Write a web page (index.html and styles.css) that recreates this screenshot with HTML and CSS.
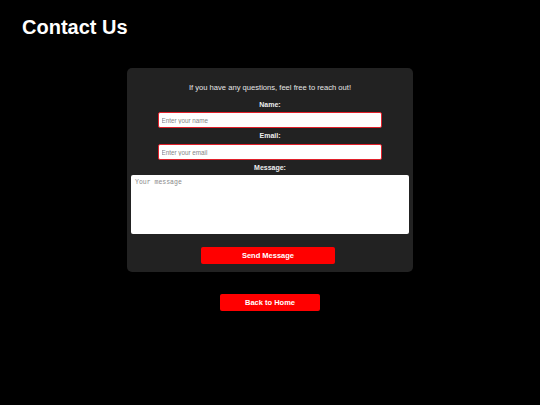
FILE: index.html
```html
<!DOCTYPE html>
<html lang="en">
<head>
<meta charset="utf-8">
<title>Contact Us</title>
<link rel="stylesheet" href="styles.css">
</head>
<body>
<header class="header">
  <h1 class="title">Contact Us</h1>
</header>
<main class="main">
  <form class="card">
    <p class="intro">If you have any questions, feel free to reach out!</p>
    <label class="label label-first" for="name">Name:</label>
    <input class="field" id="name" type="text" placeholder="Enter your name">
    <label class="label" for="email">Email:</label>
    <input class="field field-email" id="email" type="email" placeholder="Enter your email">
    <label class="label" for="msg">Message:</label>
    <textarea class="message" id="msg" placeholder="Your message"></textarea>
    <button class="btn btn-send" type="button">Send Message</button>
  </form>
  <button class="btn btn-home" type="button">Back to Home</button>
</main>
</body>
</html>
```

FILE: styles.css
```css
html, body {
  margin: 0;
  padding: 0;
  background: #000;
  color: #fff;
  font-family: "Liberation Sans", Arial, sans-serif;
}
.header {
  padding: 16px 22px 0;
}
.title {
  margin: 0;
  font-size: 20px;
  line-height: 23px;
  font-weight: bold;
}
.main {
  display: flex;
  flex-direction: column;
  align-items: center;
  margin-top: 29px;
}
.card {
  width: 286px;
  box-sizing: border-box;
  background: #222;
  border-radius: 5px;
  padding: 14px 4px 8px;
  display: flex;
  flex-direction: column;
  align-items: center;
}
.intro {
  margin: 0;
  font-size: 7.6px;
  line-height: 11px;
  color: #e6e6e6;
}
.label {
  display: block;
  margin-top: 3px;
  font-size: 7px;
  line-height: 9px;
  font-weight: bold;
  color: #eee;
}
.label-first {
  margin-top: 7px;
}
.field {
  margin-top: 3px;
  margin-right: 1px;
  width: 224px;
  height: 16px;
  box-sizing: border-box;
  border: 1px solid #e0202a;
  border-radius: 2px;
  background: #fff;
  padding: 0 3px;
  font-family: "Liberation Sans", Arial, sans-serif;
  font-size: 6.3px;
  color: #333;
  outline: none;
}
.field-email {
  margin-top: 4px;
}
.field::placeholder {
  color: #858585;
}
.message {
  margin-top: 3px;
  width: 278px;
  height: 59px;
  box-sizing: border-box;
  border: none;
  border-radius: 2px;
  background: #fff;
  padding: 4px;
  font-family: "Liberation Mono", "DejaVu Sans Mono", monospace;
  font-size: 6.5px;
  resize: none;
  outline: none;
}
.message::placeholder {
  color: #8a8a8a;
}
.btn {
  border: none;
  border-radius: 2px;
  background: #ff0000;
  color: #fff;
  font-family: "Liberation Sans", Arial, sans-serif;
  font-size: 7.5px;
  font-weight: bold;
  height: 17px;
  padding: 0;
  cursor: pointer;
}
.btn-send {
  margin-top: 13px;
  margin-right: 4px;
  width: 134px;
}
.btn-home {
  margin-top: 22px;
  width: 100px;
}
```
